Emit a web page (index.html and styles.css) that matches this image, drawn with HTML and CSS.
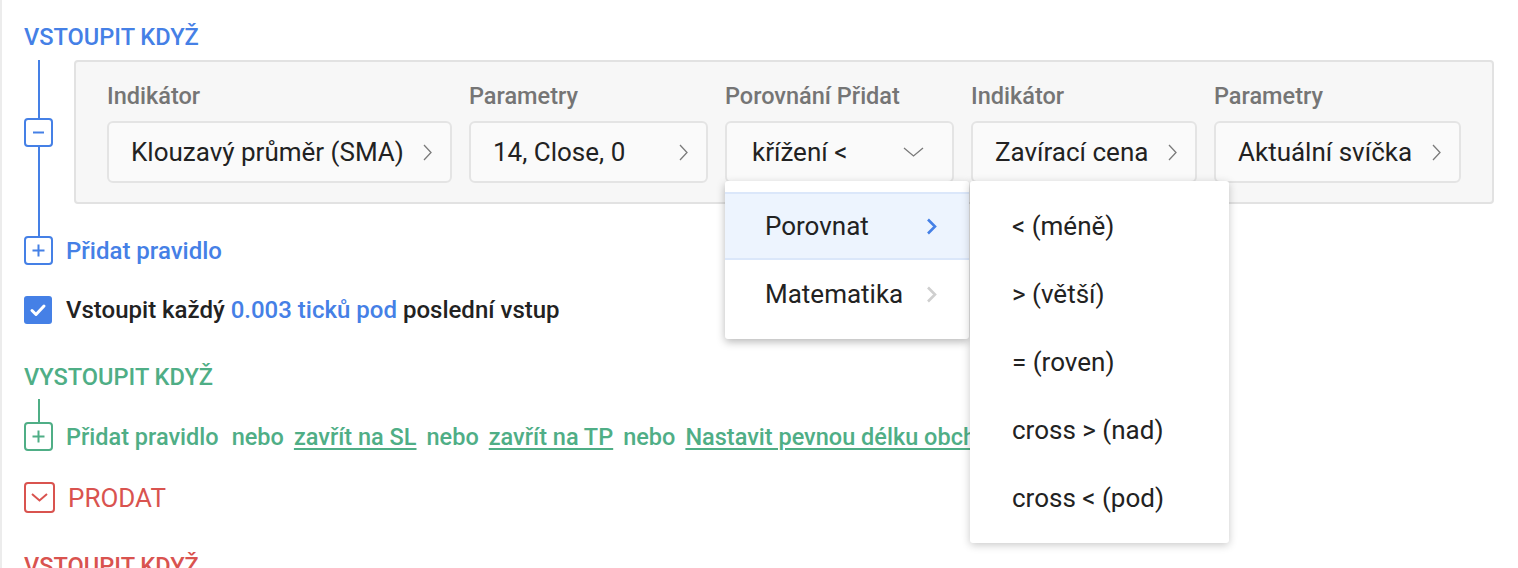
FILE: index.html
```html
<!DOCTYPE html>
<html lang="cs">
<head>
<meta charset="utf-8">
<title>Pravidla strategie</title>
<link rel="stylesheet" href="styles.css">
</head>
<body>
<div class="page">
  <section class="block">
    <h2 class="block-title title-blue">VSTOUPIT KDYŽ</h2>
    <div class="tree tree-blue">
      <div class="rule-row">
        <span class="node-btn node-blue">
          <svg viewBox="0 0 29 29" width="29" height="29"><path d="M9 14.5h11" stroke="currentColor" stroke-width="2" fill="none"/></svg>
        </span>
        <div class="rule-panel">
          <div class="field">
            <div class="field-label">Indikátor</div>
            <div class="select"><span class="select-text">Klouzavý průměr (SMA)</span><svg class="chev-right" viewBox="0 0 9 17" width="9" height="17"><path d="M1 1l7 7.5L1 16" /></svg></div>
          </div>
          <div class="field">
            <div class="field-label">Parametry</div>
            <div class="select"><span class="select-text">14, Close, 0</span><svg class="chev-right" viewBox="0 0 9 17" width="9" height="17"><path d="M1 1l7 7.5L1 16" /></svg></div>
          </div>
          <div class="field field-open">
            <div class="field-label">Porovnání Přidat</div>
            <div class="select select-open"><span class="select-text">křížení &lt;</span><svg class="chev-down" viewBox="0 0 21 10" width="21" height="10"><path d="M1 1l9.5 8L20 1" /></svg></div>
            <div class="menu menu-main">
              <div class="menu-item is-active"><span>Porovnat</span><svg class="menu-chev chev-blue" viewBox="0 0 11 17" width="11" height="17"><path d="M2 1.5l7 7-7 7" /></svg></div>
              <div class="menu-item"><span>Matematika</span><svg class="menu-chev chev-gray" viewBox="0 0 11 17" width="11" height="17"><path d="M2 1.5l7 7-7 7" /></svg></div>
            </div>
            <div class="menu menu-sub">
              <div class="menu-item sub-item">&lt; (méně)</div>
              <div class="menu-item sub-item">&gt; (větší)</div>
              <div class="menu-item sub-item">= (roven)</div>
              <div class="menu-item sub-item">cross &gt; (nad)</div>
              <div class="menu-item sub-item">cross &lt; (pod)</div>
            </div>
          </div>
          <div class="field">
            <div class="field-label">Indikátor</div>
            <div class="select"><span class="select-text">Zavírací cena</span><svg class="chev-right" viewBox="0 0 9 17" width="9" height="17"><path d="M1 1l7 7.5L1 16" /></svg></div>
          </div>
          <div class="field">
            <div class="field-label">Parametry</div>
            <div class="select"><span class="select-text">Aktuální svíčka</span><svg class="chev-right" viewBox="0 0 9 17" width="9" height="17"><path d="M1 1l7 7.5L1 16" /></svg></div>
          </div>
        </div>
      </div>
      <div class="add-row">
        <span class="node-btn node-blue">
          <svg viewBox="0 0 29 29" width="29" height="29"><path d="M8.5 14.5h12M14.5 8.5v12" stroke="currentColor" stroke-width="2" fill="none"/></svg>
        </span>
        <span class="add-link link-blue">Přidat pravidlo</span>
      </div>
    </div>
    <div class="check-row">
      <span class="checkbox">
        <svg viewBox="0 0 28 28" width="28" height="28"><path d="M8 14.5l4 4 8-8.5" stroke="#fff" stroke-width="3" fill="none" stroke-linecap="round" stroke-linejoin="round"/></svg>
      </span>
      <span class="check-text">Vstoupit každý <span class="accent-blue">0.003 ticků pod</span> poslední vstup</span>
    </div>
  </section>

  <section class="block block-exit">
    <h2 class="block-title title-green">VYSTOUPIT KDYŽ</h2>
    <div class="tree tree-green">
      <div class="add-row add-row-exit">
        <span class="node-btn node-green">
          <svg viewBox="0 0 29 29" width="29" height="29"><path d="M8.5 14.5h12M14.5 8.5v12" stroke="currentColor" stroke-width="2" fill="none"/></svg>
        </span>
        <div class="exit-links">
          <span class="add-link exit-add">Přidat pravidlo</span>
          <span class="or-word">nebo</span>
          <span class="u-link">zavřít na SL</span>
          <span class="or-word">nebo</span>
          <span class="u-link">zavřít na TP</span>
          <span class="or-word">nebo</span>
          <span class="u-link">Nastavit pevnou délku obchodu</span>
        </div>
      </div>
    </div>
  </section>

  <div class="side-row">
    <span class="side-btn">
      <svg viewBox="0 0 31 31" width="31" height="31"><path d="M8 12l7.5 6.5L23 12" stroke="currentColor" stroke-width="2" fill="none"/></svg>
    </span>
    <span class="side-text">PRODAT</span>
  </div>

  <section class="block block-sell">
    <h2 class="block-title title-red">VSTOUPIT KDYŽ</h2>
  </section>
</div>
</body>
</html>
```

FILE: styles.css
```css
html, body {
  margin: 0;
  padding: 0;
  background: #fff;
}
body {
  font-family: Roboto, "Noto Sans", "Liberation Sans", sans-serif;
  color: #222;
  overflow: hidden;
  height: 568px;
}
.page {
  border-left: 2px solid #ececec;
  padding: 24px 24px 0 22px;
  min-height: 568px;
  box-sizing: border-box;
}
.block-title {
  margin: 0;
  font-size: 23.6px;
  line-height: 27px;
  font-weight: 500;
}
.title-blue { color: #4580e6; }
.title-green { color: #4fae86; }
.title-red { color: #d9534f; }

.tree {
  position: relative;
  margin-top: 9px;
}
.tree::before {
  content: "";
  position: absolute;
  left: 14px;
  width: 2px;
  top: 0;
  bottom: 29px;
}
.tree-blue::before { background: #4580e6; }
.tree-green::before { background: #4fae86; }

.node-btn {
  position: relative;
  z-index: 1;
  flex: 0 0 auto;
  width: 29px;
  height: 29px;
  box-sizing: border-box;
  border: 2px solid currentColor;
  border-radius: 4px;
  background: #fff;
  display: flex;
  align-items: center;
  justify-content: center;
}
.node-btn svg {
  margin: -2px;
  display: block;
}
.node-blue { color: #4580e6; }
.node-green { color: #4fae86; }

.rule-row {
  display: flex;
  align-items: center;
  gap: 21px;
}
.rule-panel {
  flex: 1;
  height: 144px;
  box-sizing: border-box;
  border: 2px solid #e2e2e2;
  border-radius: 4px;
  background: #f7f7f7;
  padding: 21px 29px 19px 31px;
  display: grid;
  grid-template-columns: 345px 239px 229px 226px 247px;
  column-gap: 17px;
}
.field {
  position: relative;
  min-width: 0;
}
.field-label {
  font-size: 23.5px;
  line-height: 26px;
  font-weight: 500;
  color: #757575;
  margin-bottom: 12px;
  white-space: nowrap;
}
.select {
  height: 62px;
  box-sizing: border-box;
  border: 2px solid #e4e4e4;
  border-radius: 6px;
  background: #fafafa;
  display: flex;
  align-items: center;
  justify-content: space-between;
  padding: 0 18px 0 22px;
}
.select-text {
  font-size: 26px;
  white-space: nowrap;
  color: #222;
}
.chev-right path, .chev-down path {
  fill: none;
  stroke: #7a7a7a;
  stroke-width: 1.3;
}
.select-open {
  padding-right: 28px;
  padding-left: 25px;
}

.menu {
  position: absolute;
  z-index: 10;
  top: 98px;
  background: #fff;
  border-radius: 3px;
  box-shadow: 0 3px 9px rgba(0, 0, 0, 0.28);
  padding: 11px 0;
}
.menu-main {
  left: 0;
  width: 244px;
}
.menu-sub {
  left: 245px;
  width: 259px;
  box-shadow: 0 2px 8px rgba(0, 0, 0, 0.22);
}
.menu-item {
  height: 68px;
  box-sizing: border-box;
  display: flex;
  align-items: center;
  justify-content: space-between;
  padding: 0 32px 0 40px;
  font-size: 26px;
  color: #222;
  white-space: nowrap;
}
.menu-item.is-active {
  background: #edf4fe;
  border-top: 2px solid #dbe7fa;
  border-bottom: 2px solid #dbe7fa;
}
.menu-chev path {
  fill: none;
  stroke-width: 2.6;
}
.chev-blue path { stroke: #4580e6; }
.chev-gray path { stroke: #cfcfcf; }
.sub-item {
  padding-left: 42px;
}

.add-row {
  display: flex;
  align-items: center;
  gap: 13px;
  margin-top: 32px;
}
.add-link {
  font-size: 24px;
  font-weight: 500;
  white-space: nowrap;
}
.link-blue { color: #4580e6; }

.check-row {
  display: flex;
  align-items: center;
  gap: 14px;
  margin-top: 31px;
}
.checkbox {
  width: 28px;
  height: 28px;
  border-radius: 3px;
  background: #4580e6;
  display: block;
}
.checkbox svg { display: block; }
.check-text {
  font-size: 24px;
  font-weight: 500;
  color: #222;
  white-space: nowrap;
}
.accent-blue { color: #4580e6; }

.block-exit {
  margin-top: 40px;
}
.block-exit .tree {
  margin-top: 8px;
}
.add-row-exit {
  margin-top: 0;
  padding-top: 23px;
}
.tree-green::before {
  bottom: auto;
  height: 24px;
}
.exit-links {
  display: flex;
  align-items: baseline;
  gap: 10px;
  color: #4fae86;
  font-size: 23.5px;
  font-weight: 500;
  white-space: nowrap;
}
.exit-add {
  font-size: 23.5px;
  margin-right: 3px;
}
.u-link {
  text-decoration: underline;
  text-underline-offset: 3px;
  text-decoration-thickness: 2px;
}

.side-row {
  display: flex;
  align-items: center;
  gap: 13px;
  margin-top: 31px;
}
.side-btn {
  width: 31px;
  height: 31px;
  box-sizing: border-box;
  border: 2px solid #d9534f;
  border-radius: 4px;
  color: #d9534f;
  display: flex;
  align-items: center;
  justify-content: center;
}
.side-btn svg { margin: -2px; display: block; }
.side-text {
  font-size: 26px;
  color: #d9534f;
}
.block-sell {
  margin-top: 40px;
}
```
